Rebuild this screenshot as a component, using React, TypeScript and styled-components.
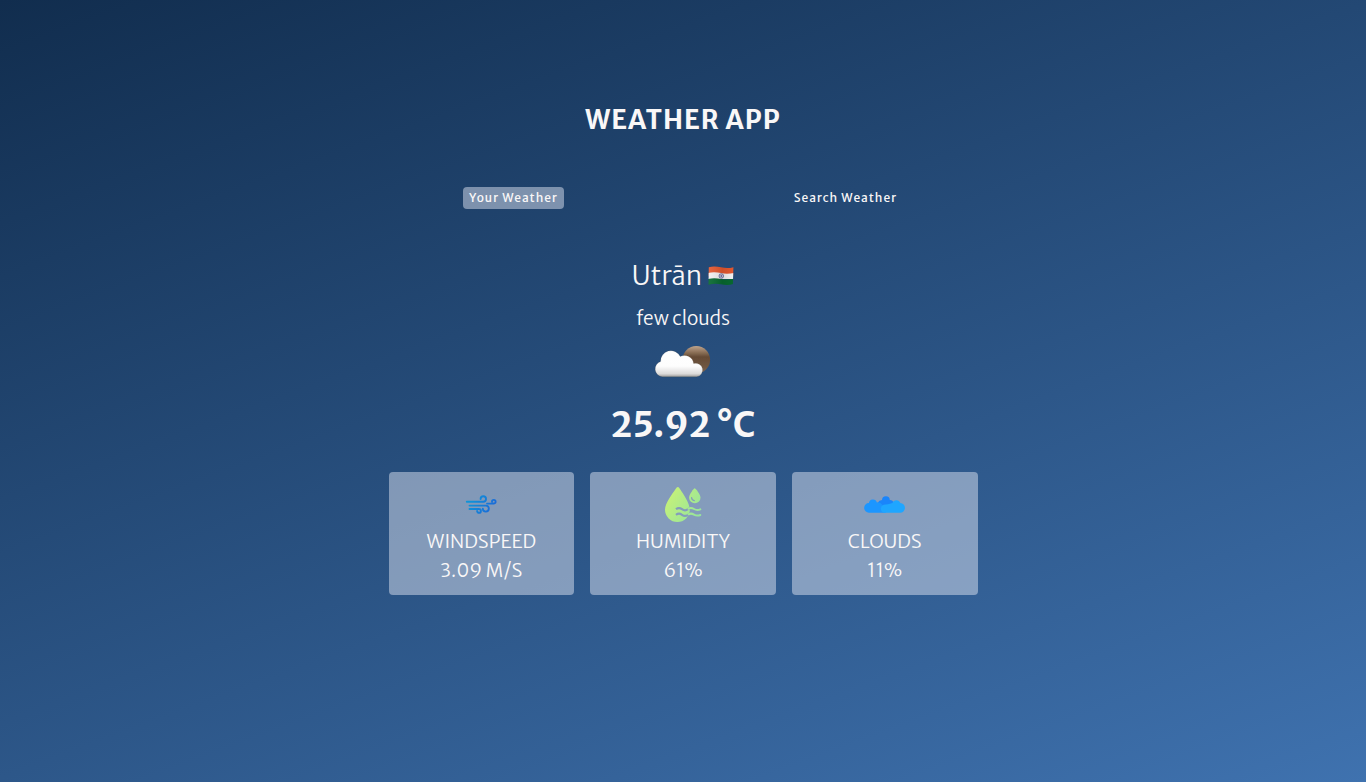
import React, { useState } from "react";
import styled, { createGlobalStyle } from "styled-components";

const GlobalStyle = createGlobalStyle`
  * {
    box-sizing: border-box;
    margin: 0;
    padding: 0;
  }
  body {
    font-family: "Merriweather Sans", "Open Sans", sans-serif;
    font-weight: 300;
    color: #f9f7f7;
  }
`;

const Page = styled.main`
  min-height: 100vh;
  display: flex;
  flex-direction: column;
  align-items: center;
  padding: 104px 16px 64px;
  background-image: linear-gradient(160deg, #112d4e 0%, #3f72af 100%);
`;

const Title = styled.h1`
  font-size: 26px;
  line-height: 32px;
  font-weight: 700;
  letter-spacing: 1px;
  text-transform: uppercase;
`;

const Tabs = styled.nav`
  width: 100%;
  max-width: 440px;
  margin-top: 51px;
  display: flex;
  justify-content: space-between;
`;

const Tab = styled.button<{ $active: boolean }>`
  padding: 3px 6px;
  border: 0;
  border-radius: 4px;
  background: ${(p) => (p.$active ? "rgba(219, 226, 239, 0.5)" : "transparent")};
  color: inherit;
  font-family: inherit;
  font-size: 12px;
  line-height: 16px;
  font-weight: 500;
  letter-spacing: 1px;
  cursor: pointer;
`;

const Report = styled.section`
  width: 100%;
  margin-top: 49px;
  display: flex;
  flex-direction: column;
  align-items: center;
`;

const Place = styled.div`
  display: flex;
  align-items: center;
  gap: 6px;
`;

const City = styled.h2`
  font-size: 26px;
  line-height: 36px;
  font-weight: 300;
`;

const Description = styled.p`
  margin: 10px 0;
  font-size: 19px;
  line-height: 28px;
`;

const Temperature = styled.p`
  margin: 11px 0 15px;
  font-size: 35px;
  line-height: 64px;
  font-weight: 700;
`;

const Cards = styled.div`
  width: 100%;
  max-width: 589px;
  display: grid;
  grid-template-columns: repeat(3, 1fr);
  gap: 16px;
`;

const Card = styled.article`
  display: flex;
  flex-direction: column;
  align-items: center;
  gap: 4px;
  padding: 13px 16px 12px;
  border-radius: 4px;
  background: rgba(219, 226, 239, 0.5);
`;

const CardText = styled.p`
  font-size: 19px;
  line-height: 25px;
  text-transform: uppercase;
`;

const IndiaFlag = () => (
  <svg width="26" height="20" viewBox="0 0 26 20" role="img" aria-label="India">
    <defs>
      <clipPath id="flagShape">
        <path d="M.8 1.2C5 0 9 .4 13 1.3S21 2.4 25.4 1.2L24.9 18C21 19.3 17 19 13 18.2S5 17.4.5 18.8Z" />
      </clipPath>
      <linearGradient id="flagShade">
        <stop offset="0" stopColor="#fff" stopOpacity=".08" />
        <stop offset=".55" stopColor="#000" stopOpacity=".1" />
        <stop offset="1" stopColor="#000" stopOpacity="0" />
      </linearGradient>
    </defs>
    <g clipPath="url(#flagShape)">
      <path fill="#e5582f" d="M0 0h26v10H0z" />
      <path fill="#f4f2f3" d="M0 7C5 5.8 9 6.3 13 7.1S21 8 26 6.9V13H0Z" />
      <path fill="#07692f" d="M0 13C5 11.8 9 12.2 13 13S21 13.9 26 12.8V20H0Z" />
      <circle cx="13.3" cy="10" r="2.3" fill="#c9c9df" stroke="#53538f" strokeWidth=".7" />
      <circle cx="13.3" cy="10" r=".7" fill="#35357d" />
      <path fill="url(#flagShade)" d="M0 0h26v20H0z" />
    </g>
  </svg>
);

const FewClouds = () => (
  <svg width="60" height="40" viewBox="0 0 60 40" aria-hidden="true">
    <defs>
      <linearGradient id="moon" x1="0" y1="0" x2="0" y2="1">
        <stop offset="0" stopColor="#c0a58d" />
        <stop offset=".22" stopColor="#8f735a" />
        <stop offset=".4" stopColor="#654b35" />
        <stop offset=".75" stopColor="#6f5640" />
        <stop offset="1" stopColor="#7c6654" />
      </linearGradient>
      <linearGradient id="cloudFill" gradientUnits="userSpaceOnUse" x1="0" y1="8" x2="0" y2="35">
        <stop offset="0" stopColor="#fff" />
        <stop offset=".6" stopColor="#fdfdfd" />
        <stop offset=".88" stopColor="#dcdbda" />
        <stop offset="1" stopColor="#9a9896" />
      </linearGradient>
      <filter id="soft" x="-10%" y="-10%" width="120%" height="120%">
        <feGaussianBlur stdDeviation=".5" />
      </filter>
    </defs>
    <g filter="url(#soft)">
      <circle cx="43.3" cy="17.7" r="13.8" fill="url(#moon)" />
      <path
        d="M9.2 34.8A7.8 7.8 0 0 1 7.6 19.6A10.3 10.3 0 0 1 27.2 14.6A9 9 0 0 1 40.6 21.5A7.3 6.8 0 1 1 43.6 34.8Z"
        fill="url(#cloudFill)"
        stroke="#4d4038"
        strokeOpacity=".25"
        strokeWidth=".6"
      />
    </g>
  </svg>
);

const WindIcon = () => (
  <svg width="40" height="40" viewBox="0 0 40 40" fill="none" aria-hidden="true">
    <defs>
      <linearGradient id="wind" gradientUnits="userSpaceOnUse" x1="12" y1="12" x2="32" y2="24">
        <stop offset="0" stopColor="#0f93d8" />
        <stop offset="1" stopColor="#1b6ad8" />
      </linearGradient>
    </defs>
    <g stroke="url(#wind)" strokeWidth="1.9" strokeLinecap="round">
      <path d="M5.8 16.7H22.3a2.7 2.7 0 1 0-2.7-2.7" />
      <path d="M26 18.6H30.5Q31.5 18.6 32.9 18.5a1.8 1.8 0 1 0-1.9-1.8" />
      <path d="M8.5 20.6H24.8a3 3 0 1 1-3 3" />
      <path d="M8.5 24H18a1.9 1.9 0 1 1-1.9 1.9" />
    </g>
  </svg>
);

const HumidityIcon = () => (
  <svg width="40" height="40" viewBox="0 0 40 40" aria-hidden="true">
    <defs>
      <linearGradient id="humid" gradientUnits="userSpaceOnUse" x1="4" y1="8" x2="36" y2="30">
        <stop offset="0" stopColor="#c8f277" />
        <stop offset="1" stopColor="#97e59a" />
      </linearGradient>
      <mask id="humidCut">
        <path fill="#fff" d="M0 0h40v40H0z" />
        <g fill="none" stroke="#000" strokeWidth="2.2">
          <path d="M13 24.2q3-2.3 6 0t6 0 6 0" />
          <path d="M13 29.8q3-2.3 6 0t6 0 6 0" />
        </g>
      </mask>
    </defs>
    <g fill="url(#humid)">
      <path
        mask="url(#humidCut)"
        d="M14.8 2C15.7 2 16.2 2.7 17 4C20.5 9.5 26.8 18 26.8 24.8A12.4 12.2 0 0 1 2 24.8C2 18 9 9.5 12.6 4C13.5 2.7 14 2 14.8 2Z"
      />
      <path d="M31.7 3.3C32.4 3.3 37.5 9.3 37.5 12.8A5.7 5.4 0 0 1 26.1 12.8C26.1 9.3 31 3.3 31.7 3.3Z" />
    </g>
    <path d="M28.6 12.6a3.1 3.1 0 0 0 2.7 3" fill="none" stroke="#849bbb" strokeWidth="1.2" strokeLinecap="round" />
    <g fill="none" stroke="url(#humid)" strokeWidth="2" strokeLinecap="round">
      <path d="M25.5 23.7q2.5-1.5 5.5.3t6.300.4" />
      <path d="M25.5 29.3q2.5-1.5 5.5.3t6.300.4" />
    </g>
  </svg>
);

const CloudsIcon = () => (
  <svg width="42" height="40" viewBox="0 0 42 40" aria-hidden="true">
    <path fill="#1a85fb" d="M14 22V17.5Q15 15.3 18 15.1A3.9 3.9 0 0 1 25.8 15.1Q29 15 29.5 18V22Z" />
    <path fill="#1c96ff" d="M5 27.7A4.8 4.8 0 0 1 4.9 18.1A4.1 4.1 0 0 1 12.9 17.4Q16 16.3 18.5 20L22 27.7Z" />
    <path fill="#1fa6ff" d="M20.5 27.7A4.1 4.1 0 0 1 19.5 19.8Q24 19.8 28.5 18A4.1 4.1 0 0 1 36.3 18.1A4.8 4.8 0 0 1 36 27.7Z" />
  </svg>
);

const tabs = ["Your Weather", "Search Weather"];

const readings = [
  { label: "Windspeed", value: "3.09 m/s", Icon: WindIcon },
  { label: "Humidity", value: "61%", Icon: HumidityIcon },
  { label: "Clouds", value: "11%", Icon: CloudsIcon },
];

export default function App() {
  const [active, setActive] = useState(tabs[0]);

  return (
    <>
      <GlobalStyle />
      <Page>
        <Title>Weather App</Title>
        <Tabs>
          {tabs.map((tab) => (
            <Tab key={tab} type="button" $active={tab === active} onClick={() => setActive(tab)}>
              {tab}
            </Tab>
          ))}
        </Tabs>
        <Report>
          <Place>
            <City>Utrān</City>
            <IndiaFlag />
          </Place>
          <Description>few clouds</Description>
          <FewClouds />
          <Temperature>25.92 °C</Temperature>
          <Cards>
            {readings.map(({ label, value, Icon }) => (
              <Card key={label}>
                <Icon />
                <CardText>{label}</CardText>
                <CardText>{value}</CardText>
              </Card>
            ))}
          </Cards>
        </Report>
      </Page>
    </>
  );
}
